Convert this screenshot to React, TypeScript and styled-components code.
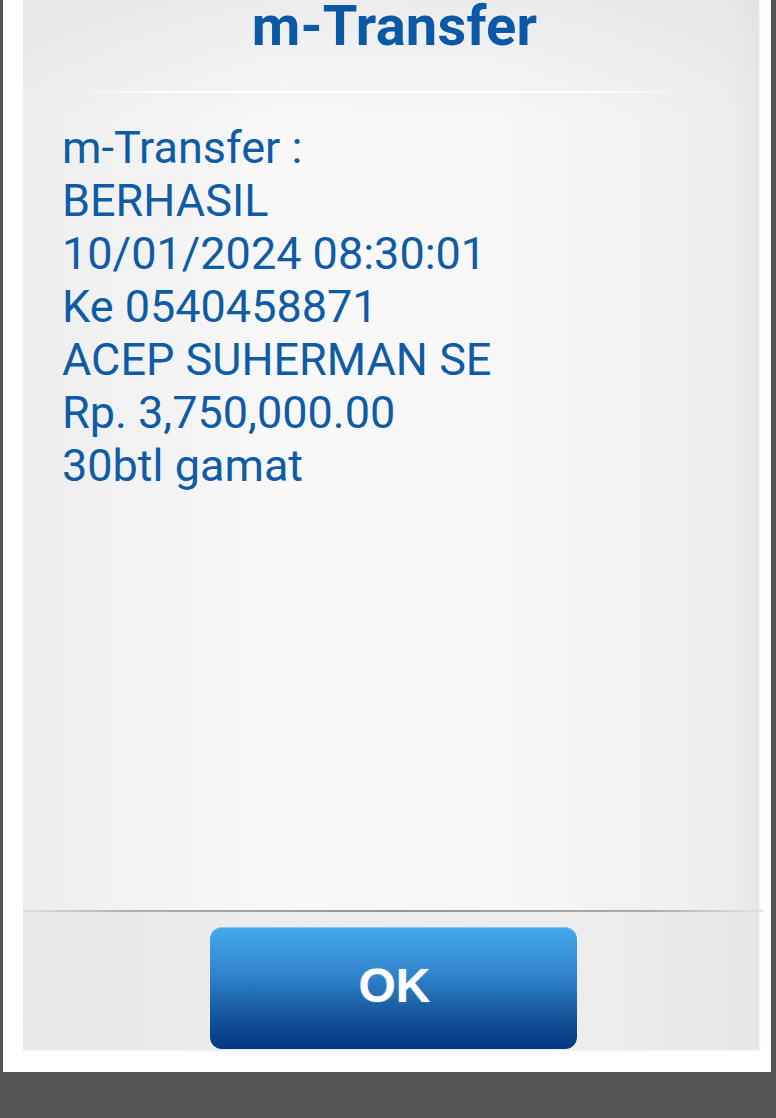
import React from 'react';
import styled, { createGlobalStyle } from 'styled-components';

const lines = [
  'm-Transfer :',
  'BERHASIL',
  '10/01/2024 08:30:01',
  'Ke 0540458871',
  'ACEP SUHERMAN SE',
  'Rp. 3,750,000.00',
  '30btl gamat',
];

export default () => (
  <Screen>
    <GlobalStyle />
    <Frame>
      <Panel>
        <Header>
          <Title>m-Transfer</Title>
        </Header>
        <Body>
          {lines.map((line) => (
            <Line key={line}>{line}</Line>
          ))}
        </Body>
        <Footer>
          <OkButton type="button">OK</OkButton>
        </Footer>
      </Panel>
    </Frame>
  </Screen>
);

const GlobalStyle = createGlobalStyle`
  html, body {
    margin: 0;
    padding: 0;
    background: #555555;
  }
  body {
    font-family: Roboto, "Noto Sans", sans-serif;
  }
`;

const Screen = styled.div`
  width: 776px;
  height: 1118px;
  background: #555555;
  padding: 0 5px 0 3px;
  box-sizing: border-box;
  overflow: hidden;
`;

const Frame = styled.div`
  height: 1072px;
  background: #ffffff;
  padding: 0 12px 22px 20px;
  box-sizing: border-box;
  display: flex;
`;

const Panel = styled.div`
  flex: 1;
  display: flex;
  flex-direction: column;
  background:
    linear-gradient(to bottom, rgba(225, 225, 225, 0.5), rgba(255, 255, 255, 0) 120px),
    linear-gradient(to right, #eeeeee, #f8f8f8 35%, #f7f7f7 65%, #eeeeee 96%, #e6e6e6);
  box-shadow: 1px 1px 2px rgba(0, 0, 0, 0.06);
`;

const Header = styled.div`
  position: relative;
  height: 93px;
  text-align: center;
  &::after {
    content: '';
    position: absolute;
    left: 40px;
    right: 60px;
    bottom: 0;
    height: 2px;
    background: linear-gradient(to right, rgba(255, 255, 255, 0), #ffffff 20%, #ffffff 80%, rgba(255, 255, 255, 0));
  }
`;

const Title = styled.h1`
  margin: 0;
  padding: 0 0 0 7px;
  font-family: Roboto, "Noto Sans", sans-serif;
  font-weight: 700;
  font-size: 56px;
  line-height: 52px;
  letter-spacing: 0.2px;
  color: #0b59a6;
`;

const Body = styled.div`
  flex: 1;
  padding: 28px 0 0 39px;
`;

const Line = styled.div`
  font-size: 45px;
  line-height: 53px;
  color: #0e5ba6;
  white-space: nowrap;
`;

const Footer = styled.div`
  position: relative;
  height: 140px;
  display: flex;
  justify-content: center;
  padding: 17px 0 0 5px;
  box-sizing: border-box;
  background: linear-gradient(to right, #e8e8e8, #eeeeee 40%, #ededed 80%, #e6e6e6);
  &::before {
    content: '';
    position: absolute;
    left: 0;
    right: -4px;
    top: 0;
    height: 2px;
    background: linear-gradient(to right, #dcdfe2, #a8aeb5 15%, #8f969e 50%, #a8aeb5 85%, #e2e4e6);
  }
`;

const OkButton = styled.button`
  width: 367px;
  height: 122px;
  border: none;
  border-radius: 12px;
  background: linear-gradient(to bottom, #45aaea, #2f83cb 40%, #17589f 70%, #02367f);
  box-shadow: inset 0 1px 0 rgba(255, 255, 255, 0.35);
  color: #ffffff;
  font-family: "Liberation Sans", Arial, sans-serif;
  font-weight: 700;
  font-size: 48px;
  padding: 0 0 6px 2px;
  cursor: pointer;
  text-shadow: 0 0 2px rgba(255, 255, 255, 0.3);
`;
